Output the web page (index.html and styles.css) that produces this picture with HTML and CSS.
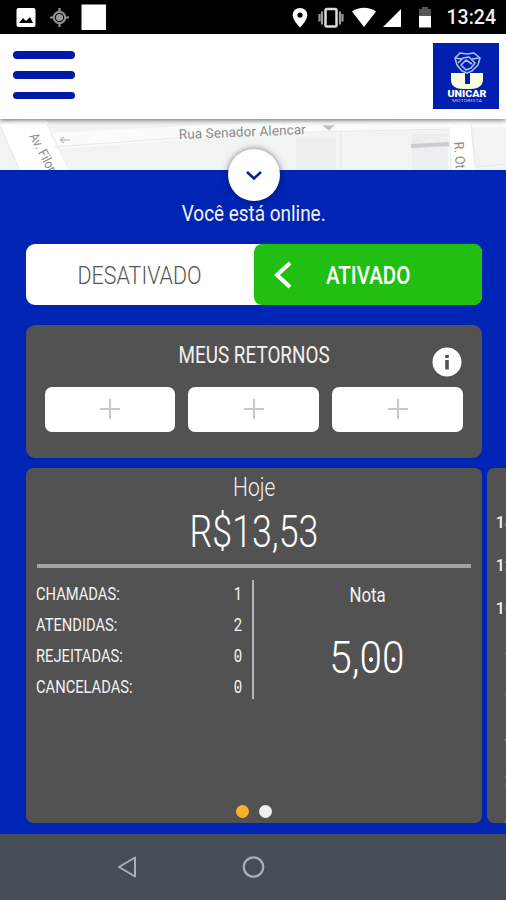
FILE: index.html
```
<!DOCTYPE html>
<html lang="pt-BR">
<head>
    <meta charset="UTF-8">
    <meta name="viewport" content="width=device-width, initial-scale=1.0">
    <title>Unicar Motorista</title>
    <link rel="stylesheet" href="styles.css">
</head>
<body>
    <!-- Status bar -->
    <div class="status-bar">
        <svg width="506" height="34" viewBox="0 0 506 34">
            <rect x="16.5" y="8" width="19" height="19" rx="2" fill="#fff"/>
            <path d="M19 23l4-5 3 3 4-4 3 6z" fill="#000"/>
            <g fill="none" stroke="#8f8f8f">
                <circle cx="59.5" cy="17.5" r="5.700" stroke-width="2.200"/>
                <path d="M59.500 8v4M59.500 23v4M50 17.500h4M65 17.500h4" stroke-width="2.200"/>
                <circle cx="59.5" cy="17.500" r="3.600" fill="#999" stroke="none"/>
            </g>
            <rect x="81.500" y="4.500" width="24.500" height="25.500" fill="#fff"/>
            <path d="M300 8c-4.200 0-7.300 3.200-7.300 7.200 0 5.200 7.300 12.300 7.300 12.300s7.300-7.100 7.300-12.300c0-4-3.100-7.200-7.300-7.200z" fill="#fff"/>
            <circle cx="300" cy="15" r="2.600" fill="#000"/>
            <rect x="325.500" y="9" width="11" height="17.500" rx="1.500" fill="none" stroke="#ddd" stroke-width="2.500"/>
            <path d="M322 11.500v13M340 11.500v13M319.500 14v7.500M342.500 14v7.500" stroke="#999" stroke-width="2.200"/>
            <path d="M352 11.500c7-5 17-5 24 0L364 27z" fill="#fff"/>
            <path d="M401 9v18h-18z" fill="#fff"/>
            <path d="M419 9h3V7h6v2h3v8h-12z" fill="#555"/>
            <path d="M419 16h12v11.500h-12z" fill="#fff"/>
        </svg>
        <span class="clock">13:24</span>
    </div>

    <!-- Header -->
    <header>
        <button class="menu" aria-label="Menu"><i></i><i></i><i></i></button>
        <div class="logo">
            <svg width="66" height="66" viewBox="0 0 66 66">
                <g fill="none" stroke="#a9c0e6" stroke-width="1.600" stroke-linejoin="round">
                    <path d="M29 28l-5-6-2-7 5-5 7 1 7-1 6 5-2 7-6 6-5 2z"/>
                    <path d="M25 20l5-5 6-1 6 6-4 5-5 2-5-5 5-5 6 4"/>
                    <path d="M22 15l7 1M46 15l-7 1"/>
                </g>
                <path d="M18 30h14v11h5V30h13v7c0 6-6 9-12 9h-8c-7 0-12-3-12-9z" fill="#fffde0"/>
                <text x="34" y="54" text-anchor="middle" textLength="39" lengthAdjust="spacingAndGlyphs" class="logo-name">UNICAR</text>
                <text x="34" y="58.500" text-anchor="middle" textLength="30" lengthAdjust="spacingAndGlyphs" class="logo-sub">MOTORISTA</text>
            </svg>
        </div>
    </header>

    <!-- Map strip -->
    <div class="map">
        <svg width="506" height="51" viewBox="0 0 506 51">
            <rect width="506" height="51" fill="#f2f4f4"/>
            <path d="M0 4L24 0h22l24 51H20z" fill="#fff"/>
            <path d="M48 14l180-9 205-5h73v8l-270 9-180 13z" fill="#fafbfb"/>
            <path d="M448 0h22l5 51h-26z" fill="#fff"/>
            <g fill="none" stroke="#e6e8e9">
                <path d="M0 8l20 43M47 5l22 46M54 28l175-13 220-5M341 13v38M449 8l2 43M471 5l4 43 31-3"/>
            </g>
            <rect x="296" y="18" width="40" height="33" fill="#eef0f0"/>
            <rect x="412" y="15" width="36" height="36" fill="#eceeef"/>
            <path d="M411 27l38-2" stroke="#ccc" stroke-width="4"/>
            <path d="M60 21h10M60 21l4-3M60 21l4 3M324 7h9l-4 4z" stroke="#c4c4c4" stroke-width="1.300" fill="#c4c4c4"/>
            <g class="street">
                <text x="179" y="20" textLength="127" transform="rotate(-2.200 179 20)">Rua Senador Alencar</text>
                <text x="29" y="17" textLength="42" lengthAdjust="spacingAndGlyphs" transform="rotate(62 29 17)">Av. Filor</text>
                <text x="454" y="23" textLength="27" lengthAdjust="spacingAndGlyphs" transform="rotate(86 454 23)">R. Ot</text>
            </g>
        </svg>
    </div>

    <!-- Driver panel -->
    <main>
        <button class="collapse" aria-label="Recolher">
            <svg width="20" height="14" viewBox="0 0 20 14"><path d="M3 4l7 6.500L17 4" fill="none" stroke="#0a2590" stroke-width="2.600"/></svg>
        </button>
        <p class="online"><span class="narrow">Você está online.</span></p>

        <div class="toggle">
            <div class="off"><span class="narrow">DESATIVADO</span></div>
            <div class="on">
                <svg width="20" height="30" viewBox="0 0 20 30"><path d="M17 3L4 15l13 12" fill="none" stroke="#fff" stroke-width="4"/></svg>
                <span class="narrow">ATIVADO</span>
            </div>
        </div>

        <section class="returns">
            <h2><span class="narrow">MEUS RETORNOS</span></h2>
            <svg class="info" width="30" height="30" viewBox="0 0 30 30">
                <circle cx="15" cy="15" r="14.500" fill="#fff"/>
                <path d="M13.200 8h3.600v3h-3.600zM13.200 13h3.600v9.500h-3.600z" fill="#525252"/>
            </svg>
            <div class="slots">
                <button><svg width="20" height="20"><path d="M10 0v20M0 10h20" stroke="#c8c8c8" stroke-width="2"/></svg></button>
                <button><svg width="20" height="20"><path d="M10 0v20M0 10h20" stroke="#c8c8c8" stroke-width="2"/></svg></button>
                <button><svg width="20" height="20"><path d="M10 0v20M0 10h20" stroke="#c8c8c8" stroke-width="2"/></svg></button>
            </div>
        </section>

        <div class="carousel">
            <section class="card today">
                <h3><span class="narrow">Hoje</span></h3>
                <p class="amount"><span class="narrow">R$13,53</span></p>
                <div class="stats">
                    <ul>
                        <li><span class="narrow">CHAMADAS:</span><b>1</b></li>
                        <li><span class="narrow">ATENDIDAS:</span><b>2</b></li>
                        <li><span class="narrow">REJEITADAS:</span><b class="zero">0</b></li>
                        <li><span class="narrow">CANCELADAS:</span><b class="zero">0</b></li>
                    </ul>
                    <div class="rating">
                        <h4><span class="narrow">Nota</span></h4>
                        <p><span class="narrow">5,<span class="zero">0</span><span class="zero">0</span></span></p>
                    </div>
                </div>
                <div class="dots"><i class="active"></i><i></i></div>
            </section>
            <section class="card chart">
                <span>14</span>
                <span>12</span>
                <span>10</span>
                <span>8</span>
                <span>6</span>
                <span>4</span>
                <span>2</span>
                <span>0</span>
            </section>
        </div>
    </main>

    <!-- Android navigation -->
    <footer>
        <svg width="506" height="66" viewBox="0 0 506 66">
            <path d="M135 23.500v19L119 33z" fill="none" stroke="#a9afb4" stroke-width="2" stroke-linejoin="round"/>
            <circle cx="253.500" cy="33" r="9.700" fill="none" stroke="#a9afb4" stroke-width="2.200"/>
        </svg>
    </footer>
</body>
</html>
```
FILE: styles.css
```
* {
    box-sizing: border-box;
}
body {
    margin: 0;
    width: 506px;
    height: 900px;
    overflow: hidden;
    display: flex;
    flex-direction: column;
    font-family: Roboto, "Liberation Sans", sans-serif;
    background-color: #0024b4;
    color: #f2f2f2;
}
h2, h3, h4, p, ul {
    margin: 0;
    padding: 0;
    font-weight: 300;
    list-style: none;
}
button {
    border: none;
    padding: 0;
    background: #fff;
}
svg {
    display: block;
}
.narrow {
    display: inline-block;
    white-space: nowrap;
}
.status-bar {
    position: relative;
    flex: 0 0 34px;
    background: #000;
}
.clock {
    position: absolute;
    right: 10px;
    top: 7px;
    font-size: 19.5px;
    font-weight: 500;
    line-height: 22px;
    color: #eee;
}
header {
    flex: 0 0 85px;
    display: flex;
    justify-content: space-between;
    padding: 9px 7px 0 13px;
    background: #fff;
    position: relative;
    z-index: 1;
    box-shadow: 0 1px 5px rgba(0,0,0,0.6);
}
.menu {
    width: 62px;
    height: 48px;
    margin-top: 8px;
    display: flex;
    flex-direction: column;
    justify-content: space-between;
}
.menu i {
    height: 7.5px;
    width: 61.5px;
    border-radius: 4px;
    background: #0018a8;
}
.logo {
    width: 66px;
    height: 66px;
    background: #001eb0;
}
.logo-name {
    font-size: 8.5px;
    font-weight: 900;
    fill: #fff;
}
.logo-sub {
    font-size: 4px;
    fill: #b8c8ee;
}
.map {
    flex: 0 0 51px;
    overflow: hidden;
}
.street {
    font-size: 13.5px;
    fill: #8b8b8b;
}
main {
    flex: 0 0 664px;
    display: flex;
    flex-direction: column;
    padding-left: 25.5px;
    background: #0024b4;
}
.collapse {
    width: 52px;
    height: 52px;
    margin: -21px 0 0 202px;
    border-radius: 50%;
    display: flex;
    align-items: center;
    justify-content: center;
    position: relative;
    box-shadow: 0 0 6px rgba(0,0,0,0.5);
}
.online {
    width: 456px;
    height: 43px;
    text-align: center;
    font-size: 22px;
    font-weight: 400;
    line-height: 26px;
}
.online .narrow {
    transform: scaleX(0.86);
}
.toggle {
    width: 456px;
    height: 61px;
    display: flex;
    background: #fff;
    border-radius: 9px;
    font-size: 26.5px;
}
.off, .on {
    flex: 0 0 50%;
    display: flex;
    align-items: center;
    justify-content: center;
}
.off {
    color: #555;
    font-weight: 300;
}
.off .narrow {
    transform: scaleX(0.81);
}
.on {
    justify-content: flex-start;
    padding-left: 19px;
    background: #21bf12;
    border-radius: 8px;
    color: #fff;
    font-weight: 500;
}
.on .narrow {
    margin-left: 33px;
    transform: scaleX(0.775);
    transform-origin: left;
}
.returns {
    position: relative;
    width: 456.5px;
    height: 133px;
    margin: 20px 0 10px;
    padding: 17px 19px 0;
    background: #525252;
    border-radius: 9px;
}
.returns h2 {
    height: 44.5px;
    font-size: 23px;
    line-height: 28px;
    font-weight: 400;
    text-align: center;
}
.returns h2 .narrow {
    transform: scaleX(0.82);
}
.info {
    position: absolute;
    right: 20px;
    top: 22px;
}
.slots {
    display: flex;
    gap: 13px;
}
.slots button {
    flex: 1;
    height: 45px;
    border-radius: 7px;
    display: flex;
    align-items: center;
    justify-content: center;
}
.carousel {
    display: flex;
    gap: 5px;
    overflow: hidden;
}
.card {
    flex: 0 0 456.5px;
    height: 355px;
    background: #525252;
    border-radius: 7px;
}
.today {
    display: flex;
    flex-direction: column;
    padding: 6px 11.5px 0;
    text-align: center;
}
.today h3 {
    font-size: 25px;
    line-height: 28px;
    font-weight: 350;
}
.today h3 .narrow {
    transform: scaleX(0.84);
}
.amount {
    height: 66px;
    font-size: 45px;
    line-height: 60px;
    font-weight: 350;
    color: #fff;
    border-bottom: 4px solid #a3a3a3;
}
.amount .narrow {
    transform: scaleX(0.795);
}
.stats {
    display: flex;
    height: 131px;
    padding-top: 12px;
}
.stats ul {
    width: 217px;
    border-right: 2px solid #b5b5b5;
    padding-right: 9px;
}
.stats li {
    display: flex;
    justify-content: space-between;
    height: 31px;
    font-size: 17.5px;
    font-weight: 400;
    line-height: 29px;
}
.stats li .narrow {
    transform: scaleX(0.84);
    transform-origin: left;
    margin-left: -1.5px;
}
.stats li b {
    font-weight: 400;
    transform: scaleX(0.85);
}
.stats li .zero {
    height: 29px;
    background: radial-gradient(circle at 50% 50%, #ddd 1px, transparent 1.6px);
}
.rating {
    flex: 1;
}
.rating .narrow {
    transform: scaleX(0.84);
}
.rating h4 {
    margin-left: 11px;
    font-size: 20px;
    font-weight: 400;
    line-height: 31px;
}
.rating p {
    margin: 17px 0 0 10px;
    font-size: 45px;
    line-height: 60px;
    font-weight: 350;
    color: #fff;
}
.rating p .narrow {
    transform: scaleX(0.9);
}
.rating .zero {
    background: radial-gradient(circle at 50% 54%, #fff 1.8px, transparent 2.6px);
}
.dots {
    display: flex;
    gap: 10px;
    margin: 106px 0 0 198.5px;
}
.dots i {
    width: 13px;
    height: 13px;
    border-radius: 50%;
    background: #eee;
}
.dots .active {
    background: #fcaf24;
}
.chart {
    padding-top: 33px;
    overflow: hidden;
}
.chart span {
    display: block;
    width: 27px;
    height: 43px;
    font-size: 16px;
    line-height: 44px;
    text-align: right;
    font-weight: 500;
}
footer {
    flex: 0 0 66px;
    background: #464d57;
}
```
